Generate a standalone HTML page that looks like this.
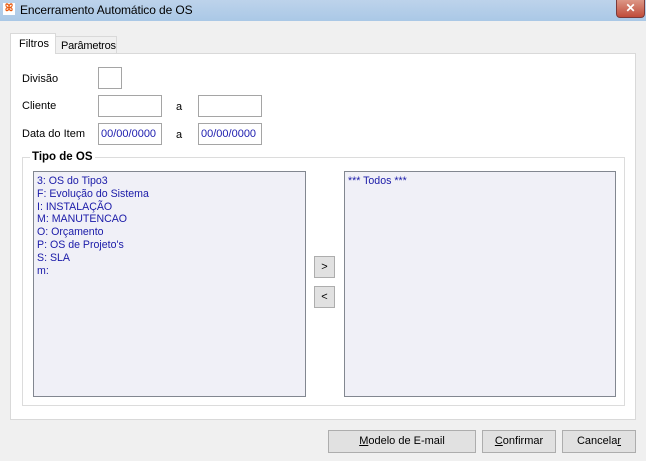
<!DOCTYPE html>
<html><head><style>
*{margin:0;padding:0;box-sizing:border-box}
body{width:646px;height:461px;background:#f0f0f0;font-family:"Liberation Sans",sans-serif;font-size:11px;color:#000;position:relative;overflow:hidden}
.a{position:absolute}
.inp{position:absolute;background:#fff;border:1px solid #a5a5a5;color:#2020b0;padding:4px 0 0 2px;font-size:11px}
.btn{position:absolute;background:#e1e1e1;border:1px solid #adadad;text-align:center;line-height:20px;font-size:11px}
.list{position:absolute;background:#f0f0f7;border:1px solid #828790;color:#1a1aa8;padding:3px 0 0 3px;line-height:12.8px;font-size:10.6px}
</style></head><body>
<div class="a" style="left:0;top:0;width:646px;height:21px;background:linear-gradient(#bdd3eb,#aac8e6)"></div>
<div class="a" style="left:3px;top:3px;width:12px;height:12px;background:#fff;color:#e85a10;font-size:10px;line-height:12px;text-align:center;font-weight:bold">ꕤ</div>
<div class="a" style="left:20px;top:3px;font-size:12px;color:#000;letter-spacing:-0.1px">Encerramento Automático de OS</div>
<div class="a" style="left:616px;top:0;width:29px;height:18px;background:linear-gradient(#dc9686,#c04c3a);border:1px solid #7a3a3a;border-top:none;border-radius:0 0 4px 4px;color:#fff;font-weight:bold;text-align:center;font-size:12px;line-height:17px">✕</div>
<div class="a" style="left:10px;top:53px;width:626px;height:367px;background:#fff;border:1px solid #d9d9d9"></div>
<div class="a" style="left:55px;top:36px;width:62px;height:18px;background:#f0f0f0;border:1px solid #d9d9d9;padding:3px 0 0 5px;letter-spacing:-0.2px">Parâmetros</div>
<div class="a" style="left:10px;top:33px;width:46px;height:21px;background:#fff;border:1px solid #d9d9d9;border-bottom:none;padding:4px 0 0 8px">Filtros</div>
<div class="a" style="left:22px;top:73px">Divisão</div>
<div class="inp" style="left:98px;top:67px;width:24px;height:22px"></div>
<div class="a" style="left:22px;top:100px">Cliente</div>
<div class="inp" style="left:98px;top:95px;width:64px;height:22px"></div>
<div class="a" style="left:176px;top:101px">a</div>
<div class="inp" style="left:198px;top:95px;width:64px;height:22px"></div>
<div class="a" style="left:22px;top:128px">Data do Item</div>
<div class="inp" style="left:98px;top:123px;width:64px;height:22px">00/00/0000</div>
<div class="a" style="left:176px;top:129px">a</div>
<div class="inp" style="left:198px;top:123px;width:64px;height:22px">00/00/0000</div>
<div class="a" style="left:22px;top:157px;width:603px;height:249px;border:1px solid #dcdcdc"></div>
<div class="a" style="left:30px;top:151px;background:#fff;padding:0 2px;font-weight:bold;font-size:11.5px">Tipo de OS</div>
<div class="list" style="left:33px;top:171px;width:273px;height:226px">3: OS do Tipo3<br>F: Evolução do Sistema<br>I: INSTALAÇÃO<br>M: MANUTENCAO<br>O: Orçamento<br>P: OS de Projeto's<br>S: SLA<br>m:</div>
<div class="list" style="left:344px;top:171px;width:272px;height:226px">*** Todos ***</div>
<div class="btn" style="left:314px;top:256px;width:21px;height:22px">&gt;</div>
<div class="btn" style="left:314px;top:286px;width:21px;height:22px">&lt;</div>
<div class="btn" style="left:328px;top:430px;width:148px;height:23px"><u>M</u>odelo de E-mail</div>
<div class="btn" style="left:482px;top:430px;width:74px;height:23px"><u>C</u>onfirmar</div>
<div class="btn" style="left:562px;top:430px;width:74px;height:23px">Cancela<u>r</u></div>
</body></html>
